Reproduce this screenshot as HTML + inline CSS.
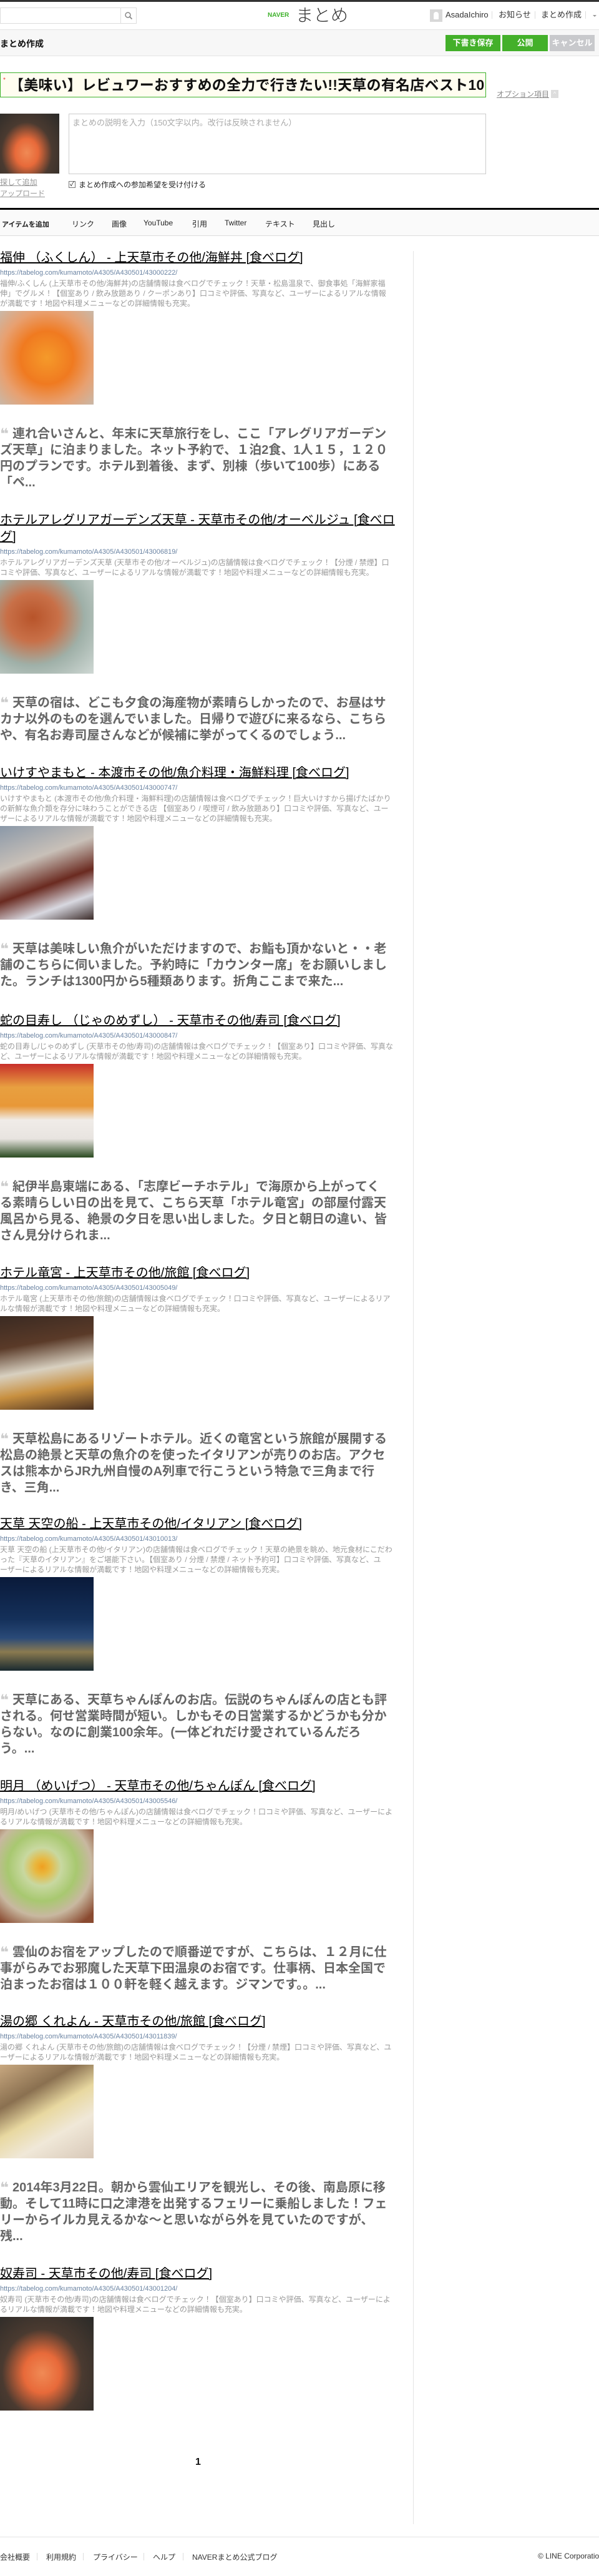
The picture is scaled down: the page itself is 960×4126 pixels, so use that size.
<!DOCTYPE html>
<html><head><meta charset="utf-8"><style>
*{margin:0;padding:0;box-sizing:border-box}
body{width:960px;height:4126px;position:relative;background:#fff;font-family:"Liberation Sans","Noto Sans CJK JP",sans-serif;color:#333;overflow:hidden}
.a{position:absolute}
.nw{white-space:nowrap}
.item{position:absolute;left:0;width:660px}
.t{font-size:20px;line-height:27px;color:#000;text-decoration:underline;white-space:nowrap}
.u{font-size:11px;line-height:14px;color:#6b84a3;margin-top:3px;white-space:nowrap}
.d{font-size:12px;line-height:16px;color:#999;margin-top:2px;white-space:nowrap}
.im{width:150px;height:150px;margin-top:4px}
.q{font-size:20px;line-height:26px;font-weight:bold;color:#666;margin-top:34px;white-space:nowrap}
.qm{display:inline-block;width:20px;height:22px;font-size:24px;line-height:26px;color:#ccc;vertical-align:top;overflow:hidden;font-family:"DejaVu Sans",sans-serif;font-weight:bold}
.btn{position:absolute;top:56px;height:26px;color:#fff;font-size:13px;font-weight:bold;text-align:center;line-height:26px}
.tab{position:absolute;top:350px;font-size:12px;color:#222}
.f{position:absolute;top:4087px;font-size:12px;color:#333}
</style></head><body>
<div class="a" style="left:0;top:0;width:960px;height:3px;background:#333"></div>
<div class="a" style="left:0;top:12px;width:219px;height:26px;border:1px solid #ddd;background:#fff"></div>
<div class="a" style="left:193px;top:13px;width:1px;height:24px;background:#ddd"></div>
<svg class="a" style="left:199px;top:18px" width="14" height="14" viewBox="0 0 14 14"><circle cx="6" cy="6" r="4" fill="none" stroke="#888" stroke-width="1.5"/><path d="M9 9l3.5 3.5" stroke="#888" stroke-width="1.8"/></svg>
<div class="a nw" style="left:429px;top:18px;font-size:10px;font-weight:bold;color:#3db12a;line-height:14px">NAVER</div>
<div class="a nw" style="left:474px;top:9px;font-size:28px;color:#333;line-height:32px;font-weight:300">まとめ</div>
<div class="a" style="left:689px;top:15px;width:20px;height:20px;background:#d8d8d8"><div style="margin:4px auto 0;width:8px;height:12px;background:#fff;border-radius:4px 4px 1px 1px"></div></div>
<div class="a nw" style="left:714px;top:16px;font-size:13px;line-height:16px">AsadaIchiro</div>
<div class="a" style="left:788px;top:18px;width:1px;height:12px;background:#ddd"></div>
<div class="a nw" style="left:799px;top:16px;font-size:13px;line-height:16px">お知らせ</div>
<div class="a" style="left:857px;top:18px;width:1px;height:12px;background:#ddd"></div>
<div class="a nw" style="left:867px;top:16px;font-size:13px;line-height:16px">まとめ作成</div>
<div class="a" style="left:938px;top:18px;width:1px;height:12px;background:#ddd"></div>
<div class="a" style="left:950px;top:24px;border:3px solid transparent;border-top:3px solid #999"></div>
<div class="a" style="left:0;top:47px;width:960px;height:43px;background:#f7f7f7;border-top:1px solid #e3e3e3;border-bottom:1px solid #e3e3e3"></div>
<div class="a nw" style="left:0;top:61px;font-size:14px;font-weight:bold;color:#111;line-height:18px">まとめ作成</div>
<div class="btn" style="left:714px;width:88px;background:#43b02a">下書き保存</div>
<div class="btn" style="left:805px;width:73px;background:#43b02a">公開</div>
<div class="btn" style="left:881px;width:72px;background:#c8c9cc">キャンセル</div>
<div class="a nw" style="left:0;top:116px;width:779px;height:40px;border:1px solid #3db12a;background:#fffdf0;overflow:hidden"><span style="position:absolute;left:4px;top:6px;color:#e33;font-size:10px">*</span><span style="position:absolute;left:14px;top:5px;font-size:23px;font-weight:bold;color:#111;line-height:28px;letter-spacing:0.2px">【美味い】レビュワーおすすめの全力で行きたい!!天草の有名店ベスト10!</span></div>
<div class="a nw" style="left:796px;top:143px;font-size:12px;color:#888;text-decoration:underline;line-height:16px">オプション項目</div>
<div class="a" style="left:883px;top:144px;width:12px;height:13px;background:#ddd;color:#fff;font-size:9px;text-align:center;line-height:13px">^</div>
<div class="a" style="left:0;top:182px;width:95px;height:96px;background:radial-gradient(ellipse at 45% 65%,#f08a55 0,#e86a3a 25%,#4a3a30 55%,#2a2a28 100%)"></div>
<div class="a" style="left:110px;top:182px;width:669px;height:97px;border:1px solid #ccc;background:#fff"></div>
<div class="a nw" style="left:116px;top:189px;font-size:13px;color:#aaa;line-height:16px">まとめの説明を入力（150文字以内。改行は反映されません）</div>
<div class="a nw" style="left:0;top:284px;font-size:12px;color:#999;text-decoration:underline;line-height:16px">探して追加</div>
<div class="a nw" style="left:0;top:302px;font-size:12px;color:#999;text-decoration:underline;line-height:16px">アップロード</div>
<div class="a" style="left:110px;top:290px;width:11px;height:11px;border:1px solid #777;font-size:10px;line-height:9px;text-align:center;color:#111">✓</div>
<div class="a nw" style="left:126px;top:288px;font-size:12px;color:#222;line-height:16px">まとめ作成への参加希望を受け付ける</div>
<div class="a" style="left:0;top:333px;width:960px;height:3px;background:#000"></div>
<div class="a" style="left:0;top:336px;width:960px;height:42px;background:#fafafa;border-bottom:1px solid #ddd"></div>
<div class="tab" style="left:3px;font-weight:bold;font-size:11px;top:351px">アイテムを追加</div>
<div class="tab" style="left:115px">リンク</div>
<div class="tab" style="left:179px">画像</div>
<div class="tab" style="left:230px">YouTube</div>
<div class="tab" style="left:308px">引用</div>
<div class="tab" style="left:360px">Twitter</div>
<div class="tab" style="left:425px">テキスト</div>
<div class="tab" style="left:501px">見出し</div>
<div class="a" style="left:662px;top:402px;width:1px;height:3641px;background:#e5e5e5"></div>

<div class="item" style="top:400px">
<div class="t">福伸 （ふくしん） - 上天草市その他/海鮮丼 [食べログ]</div>
<div class="u">https://tabelog.com/kumamoto/A4305/A430501/43000222/</div>
<div class="d">福伸/ふくしん (上天草市その他/海鮮丼)の店舗情報は食べログでチェック！天草・松島温泉で、御食事処「海鮮家福<br>伸」でグルメ！【個室あり / 飲み放題あり / クーポンあり】口コミや評価、写真など、ユーザーによるリアルな情報<br>が満載です！地図や料理メニューなどの詳細情報も充実。</div>
<div class="im" style="background:radial-gradient(ellipse at 50% 50%,#f59a2a 0,#f07a20 40%,#e8a070 70%,#c9b8a8 100%)"></div>
<div class="q"><span class="qm">❝</span>連れ合いさんと、年末に天草旅行をし、ここ「アレグリアガーデン<br>ズ天草」に泊まりました。ネット予約で、１泊2食、1人１５，１２０<br>円のプランです。ホテル到着後、まず、別棟（歩いて100歩）にある<br>「ペ...</div>
</div>

<div class="item" style="top:820px">
<div class="t">ホテルアレグリアガーデンズ天草 - 天草市その他/オーベルジュ [食べロ<br>グ]</div>
<div class="u">https://tabelog.com/kumamoto/A4305/A430501/43006819/</div>
<div class="d">ホテルアレグリアガーデンズ天草 (天草市その他/オーベルジュ)の店舗情報は食べログでチェック！【分煙 / 禁煙】口<br>コミや評価、写真など、ユーザーによるリアルな情報が満載です！地図や料理メニューなどの詳細情報も充実。</div>
<div class="im" style="background:radial-gradient(ellipse at 35% 40%,#b8542a 0,#c87048 30%,#9fb0a8 60%,#cfd8d4 100%)"></div>
<div class="q"><span class="qm">❝</span>天草の宿は、どこも夕食の海産物が素晴らしかったので、お昼はサ<br>カナ以外のものを選んでいました。日帰りで遊びに来るなら、こちら<br>や、有名お寿司屋さんなどが候補に挙がってくるのでしょう...</div>
</div>

<div class="item" style="top:1225px">
<div class="t">いけすやまもと - 本渡市その他/魚介料理・海鮮料理 [食べログ]</div>
<div class="u">https://tabelog.com/kumamoto/A4305/A430501/43000747/</div>
<div class="d">いけすやまもと (本渡市その他/魚介料理・海鮮料理)の店舗情報は食べログでチェック！巨大いけすから揚げたばかり<br>の新鮮な魚介類を存分に味わうことができる店 【個室あり / 喫煙可 / 飲み放題あり】口コミや評価、写真など、ユー<br>ザーによるリアルな情報が満載です！地図や料理メニューなどの詳細情報も充実。</div>
<div class="im" style="background:linear-gradient(160deg,#8a98a8 0,#c8c0b8 35%,#6a2a20 60%,#d8d8e0 80%,#3a2a28 100%)"></div>
<div class="q"><span class="qm">❝</span>天草は美味しい魚介がいただけますので、お鮨も頂かないと・・老<br>舗のこちらに伺いました。予約時に「カウンター席」をお願いしまし<br>た。ランチは1300円から5種類あります。折角ここまで来た...</div>
</div>

<div class="item" style="top:1622px">
<div class="t">蛇の目寿し （じゃのめずし） - 天草市その他/寿司 [食べログ]</div>
<div class="u">https://tabelog.com/kumamoto/A4305/A430501/43000847/</div>
<div class="d">蛇の目寿し/じゃのめずし (天草市その他/寿司)の店舗情報は食べログでチェック！【個室あり】口コミや評価、写真な<br>ど、ユーザーによるリアルな情報が満載です！地図や料理メニューなどの詳細情報も充実。</div>
<div class="im" style="background:linear-gradient(180deg,#c8302a 0,#e8a040 25%,#e89838 45%,#f0ece8 60%,#e8e4e0 80%,#2a4a20 100%)"></div>
<div class="q"><span class="qm">❝</span>紀伊半島東端にある、「志摩ビーチホテル」で海原から上がってく<br>る素晴らしい日の出を見て、こちら天草「ホテル竜宮」の部屋付露天<br>風呂から見る、絶景の夕日を思い出しました。夕日と朝日の違い、皆<br>さん見分けられま...</div>
</div>

<div class="item" style="top:2026px">
<div class="t">ホテル竜宮 - 上天草市その他/旅館 [食べログ]</div>
<div class="u">https://tabelog.com/kumamoto/A4305/A430501/43005049/</div>
<div class="d">ホテル竜宮 (上天草市その他/旅館)の店舗情報は食べログでチェック！口コミや評価、写真など、ユーザーによるリア<br>ルな情報が満載です！地図や料理メニューなどの詳細情報も充実。</div>
<div class="im" style="background:linear-gradient(170deg,#3a2a22 0,#5a3a28 30%,#d8d0c0 55%,#c89040 75%,#4a3020 100%)"></div>
<div class="q"><span class="qm">❝</span>天草松島にあるリゾートホテル。近くの竜宮という旅館が展開する<br>松島の絶景と天草の魚介のを使ったイタリアンが売りのお店。アクセ<br>スは熊本からJR九州自慢のA列車で行こうという特急で三角まで行<br>き、三角...</div>
</div>

<div class="item" style="top:2428px">
<div class="t">天草 天空の船 - 上天草市その他/イタリアン [食べログ]</div>
<div class="u">https://tabelog.com/kumamoto/A4305/A430501/43010013/</div>
<div class="d">天草 天空の船 (上天草市その他/イタリアン)の店舗情報は食べログでチェック！天草の絶景を眺め、地元食材にこだわ<br>った『天草のイタリアン』をご堪能下さい。【個室あり / 分煙 / 禁煙 / ネット予約可】口コミや評価、写真など、ユ<br>ーザーによるリアルな情報が満載です！地図や料理メニューなどの詳細情報も充実。</div>
<div class="im" style="background:linear-gradient(180deg,#0a1a3a 0,#14305a 45%,#2a4a78 65%,#8a7a50 80%,#1a2a30 100%)"></div>
<div class="q"><span class="qm">❝</span>天草にある、天草ちゃんぽんのお店。伝説のちゃんぽんの店とも評<br>される。何せ営業時間が短い。しかもその日営業するかどうかも分か<br>らない。なのに創業100余年。(一体どれだけ愛されているんだろ<br>う。...</div>
</div>

<div class="item" style="top:2848px">
<div class="t">明月 （めいげつ） - 天草市その他/ちゃんぽん [食べログ]</div>
<div class="u">https://tabelog.com/kumamoto/A4305/A430501/43005546/</div>
<div class="d">明月/めいげつ (天草市その他/ちゃんぽん)の店舗情報は食べログでチェック！口コミや評価、写真など、ユーザーによ<br>るリアルな情報が満載です！地図や料理メニューなどの詳細情報も充実。</div>
<div class="im" style="background:radial-gradient(circle at 45% 40%,#f0a020 0,#e8b840 10%,#c8d8a0 25%,#a8c870 45%,#c8b8a0 65%,#8a4a30 90%)"></div>
<div class="q"><span class="qm">❝</span>雲仙のお宿をアップしたので順番逆ですが、こちらは、１２月に仕<br>事がらみでお邪魔した天草下田温泉のお宿です。仕事柄、日本全国で<br>泊まったお宿は１００軒を軽く越えます。ジマンです。。...</div>
</div>

<div class="item" style="top:3225px">
<div class="t">湯の郷 くれよん - 天草市その他/旅館 [食べログ]</div>
<div class="u">https://tabelog.com/kumamoto/A4305/A430501/43011839/</div>
<div class="d">湯の郷 くれよん (天草市その他/旅館)の店舗情報は食べログでチェック！【分煙 / 禁煙】口コミや評価、写真など、ユ<br>ーザーによるリアルな情報が満載です！地図や料理メニューなどの詳細情報も充実。</div>
<div class="im" style="background:linear-gradient(150deg,#c8a880 0,#8a7050 30%,#e8d8a0 50%,#f0e8d8 70%,#d8c8b8 100%)"></div>
<div class="q"><span class="qm">❝</span>2014年3月22日。朝から雲仙エリアを観光し、その後、南島原に移<br>動。そして11時に口之津港を出発するフェリーに乗船しました！フェ<br>リーからイルカ見えるかな～と思いながら外を見ていたのですが、<br>残...</div>
</div>

<div class="item" style="top:3629px">
<div class="t">奴寿司 - 天草市その他/寿司 [食べログ]</div>
<div class="u">https://tabelog.com/kumamoto/A4305/A430501/43001204/</div>
<div class="d">奴寿司 (天草市その他/寿司)の店舗情報は食べログでチェック！【個室あり】口コミや評価、写真など、ユーザーによ<br>るリアルな情報が満載です！地図や料理メニューなどの詳細情報も充実。</div>
<div class="im" style="background:radial-gradient(ellipse at 45% 60%,#f08a55 0,#e86a3a 25%,#4a3a30 55%,#2a2a28 100%)"></div>
</div>

<div class="a nw" style="left:313px;top:3935px;font-size:16px;font-weight:bold;color:#111">1</div>
<div class="a" style="left:0;top:4063px;width:960px;height:1px;background:#e5e5e5"></div>
<div class="f" style="left:0">会社概要</div>
<div class="a" style="left:59px;top:4089px;width:1px;height:12px;background:#ddd"></div>
<div class="f" style="left:74px">利用規約</div>
<div class="a" style="left:133px;top:4089px;width:1px;height:12px;background:#ddd"></div>
<div class="f" style="left:149px">プライバシー</div>
<div class="a" style="left:230px;top:4089px;width:1px;height:12px;background:#ddd"></div>
<div class="f" style="left:245px">ヘルプ</div>
<div class="a" style="left:293px;top:4089px;width:1px;height:12px;background:#ddd"></div>
<div class="f" style="left:308px">NAVERまとめ公式ブログ</div>
<div class="f nw" style="left:862px">© LINE Corporation</div>
</body></html>
